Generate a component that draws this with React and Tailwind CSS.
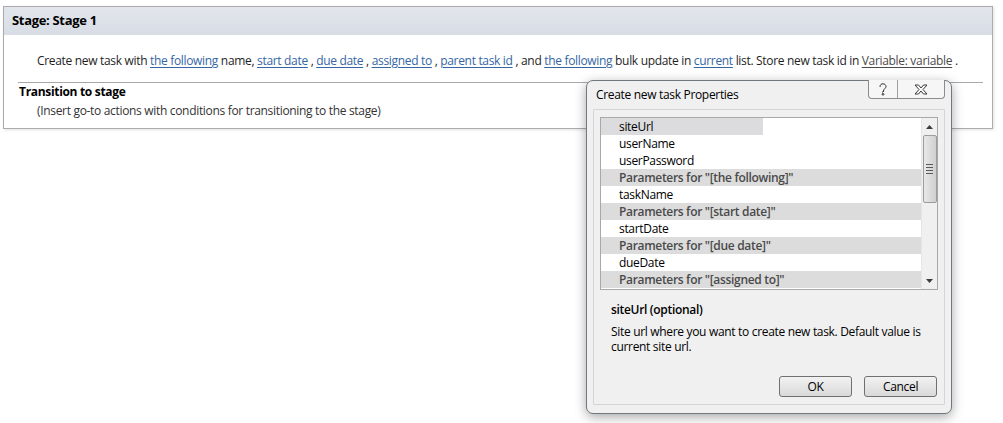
import { useState } from 'react';

const link = 'text-[#3466a5] underline underline-offset-2 decoration-[#3466a5]';

const rows = [
  { label: 'siteUrl', kind: 'selected' },
  { label: 'userName' },
  { label: 'userPassword' },
  { label: 'Parameters for "[the following]"', kind: 'group' },
  { label: 'taskName' },
  { label: 'Parameters for "[start date]"', kind: 'group' },
  { label: 'startDate' },
  { label: 'Parameters for "[due date]"', kind: 'group' },
  { label: 'dueDate' },
  { label: 'Parameters for "[assigned to]"', kind: 'group' },
];

function Row({ label, kind }) {
  if (kind === 'group') {
    return (
      <div className="h-[17px] bg-[#dcdcdc] pl-[18px] leading-[17px] font-semibold text-[#4a4a4a]">
        {label}
      </div>
    );
  }
  return (
    <div className="h-[17px] flex leading-[17px]">
      <div className={kind === 'selected' ? 'w-[162px] bg-[#dcdcdf] pl-[18px]' : 'pl-[18px]'}>{label}</div>
    </div>
  );
}

function ScrollBar() {
  return (
    <div className="w-[16px] h-full bg-[#f0f0f0] border-l border-[#e6e6e6] flex flex-col items-center">
      <div className="h-[17px] w-full flex items-center justify-center">
        <svg width="7" height="4" viewBox="0 0 7 4"><path d="M3.5 0 L7 4 L0 4 Z" fill="#3c3c3c" /></svg>
      </div>
      <div className="w-[14px] h-[68px] rounded-[2px] border border-[#9c9c9c] bg-gradient-to-r from-[#e8e8e8] via-[#dcdcdc] to-[#d0d0d0] flex flex-col items-center justify-center gap-[2px]">
        <div className="w-[7px] h-px bg-[#5a5a5a]" />
        <div className="w-[7px] h-px bg-[#5a5a5a]" />
        <div className="w-[7px] h-px bg-[#5a5a5a]" />
        <div className="w-[7px] h-px bg-[#5a5a5a]" />
      </div>
      <div className="flex-1" />
      <div className="h-[17px] w-full flex items-center justify-center">
        <svg width="7" height="4" viewBox="0 0 7 4"><path d="M0 0 L7 0 L3.5 4 Z" fill="#3c3c3c" /></svg>
      </div>
    </div>
  );
}

function PropertiesDialog() {
  const [selected] = useState('siteUrl');
  return (
    <div className="absolute left-[586px] top-[80px] w-[366px] h-[334px] rounded-[7px] border border-[#6f7880] bg-[#f0f0f0] shadow-[0_3px_12px_rgba(0,0,0,0.35)] flex flex-col px-[6px] pb-[8px]">
      <div className="h-[28px] flex items-start relative">
        <div className="pt-[5px] pl-[3px] text-[12px] text-black">Create new task Properties</div>
        <div className="absolute right-[0px] top-[-1px] flex h-[19px] border border-t-0 border-[#8c8c8c] rounded-b-[4px] bg-[#f6f6f6] overflow-hidden">
          <div className="w-[29px] flex items-center justify-center border-r border-[#a0a0a0]">
            <svg width="10" height="13" viewBox="0 0 10 13" fill="none" stroke="#333" strokeWidth="1">
              <path d="M2 4 C2 1.5 3.5 0.8 5 0.8 C6.8 0.8 8 2 8 3.5 C8 5.5 5.5 5.8 5.5 8 L5.5 9" />
              <path d="M4.5 8.5 L4.5 9.5" />
              <circle cx="5" cy="11.3" r="0.9" />
            </svg>
          </div>
          <div className="w-[46px] flex items-center justify-center">
            <svg width="14" height="11" viewBox="0 0 14 11" fill="#fafafa" stroke="#3a3a3a" strokeWidth="1">
              <path d="M1 1 L4.5 1 L7 4 L9.5 1 L13 1 L9 5.5 L13 10 L9.5 10 L7 7 L4.5 10 L1 10 L5 5.5 Z" />
            </svg>
          </div>
        </div>
      </div>
      <div className="flex-1 border border-[#d5d5d5] rounded-[1px] px-[6px] pt-[7px] flex flex-col">
        <div className="h-[173px] border border-[#a8a8a8] bg-white flex">
          <div className="flex-1 text-[12px] text-black">
            {rows.map((r) => (
              <Row key={r.label} label={r.label} kind={r.label === selected ? 'selected' : r.kind} />
            ))}
          </div>
          <ScrollBar />
        </div>
        <div className="pl-[11px] pt-[11px] text-[12px] font-semibold text-black">siteUrl (optional)</div>
        <div className="pl-[11px] pt-[5px] pr-[4px] text-[12px] leading-[15px] text-black">
          Site url where you want to create new task. Default value is current site url.
        </div>
        <div className="flex-1" />
        <div className="flex justify-end gap-[12px] pr-[1px] pb-[7px]">
          <button className="w-[73px] h-[21px] rounded-[3px] border border-[#707070] bg-gradient-to-b from-[#f2f2f2] to-[#d9d9d9] text-[12px] text-black">OK</button>
          <button className="w-[73px] h-[21px] rounded-[3px] border border-[#707070] bg-gradient-to-b from-[#f2f2f2] to-[#d9d9d9] text-[12px] text-black">Cancel</button>
        </div>
      </div>
    </div>
  );
}

export default function App() {
  return (
    <div className="relative w-[1003px] h-[423px] bg-white font-['Open_Sans',sans-serif] text-[12px] tracking-[-0.32px] text-black overflow-hidden">
      <div className="pt-[6px] pl-[3px] w-[993px]">
        <div className="border border-[#acacac] shadow-[1px_1px_3px_rgba(0,0,0,0.12)]">
          <div className="h-[28px] bg-gradient-to-b from-[#e2e6ec] to-[#d8dde5] pl-[8px] flex items-center text-[13px] font-bold text-black">
            Stage: Stage 1
          </div>
          <div className="pt-[17px] pl-[33px] h-[47px] text-[#1e1e1e]">
            Create new task with <span className={link}>the following</span> name, <span className={link}>start date</span> , <span className={link}>due date</span> , <span className={link}>assigned to</span> , <span className={link}>parent task id</span> , and <span className={link}>the following</span> bulk update in <span className={link}>current</span> list. Store new task id in <span className="text-[#4a4a4a] underline underline-offset-2">Variable: variable</span> .
          </div>
          <div className="mx-[14px] mr-[9px] border-t border-[#a8a8a8]" />
          <div className="pl-[15px] font-bold">Transition to stage</div>
          <div className="pl-[33px] pt-[1px] pb-[8px] text-[#333]">(Insert go-to actions with conditions for transitioning to the stage)</div>
        </div>
      </div>
      <PropertiesDialog />
    </div>
  );
}
